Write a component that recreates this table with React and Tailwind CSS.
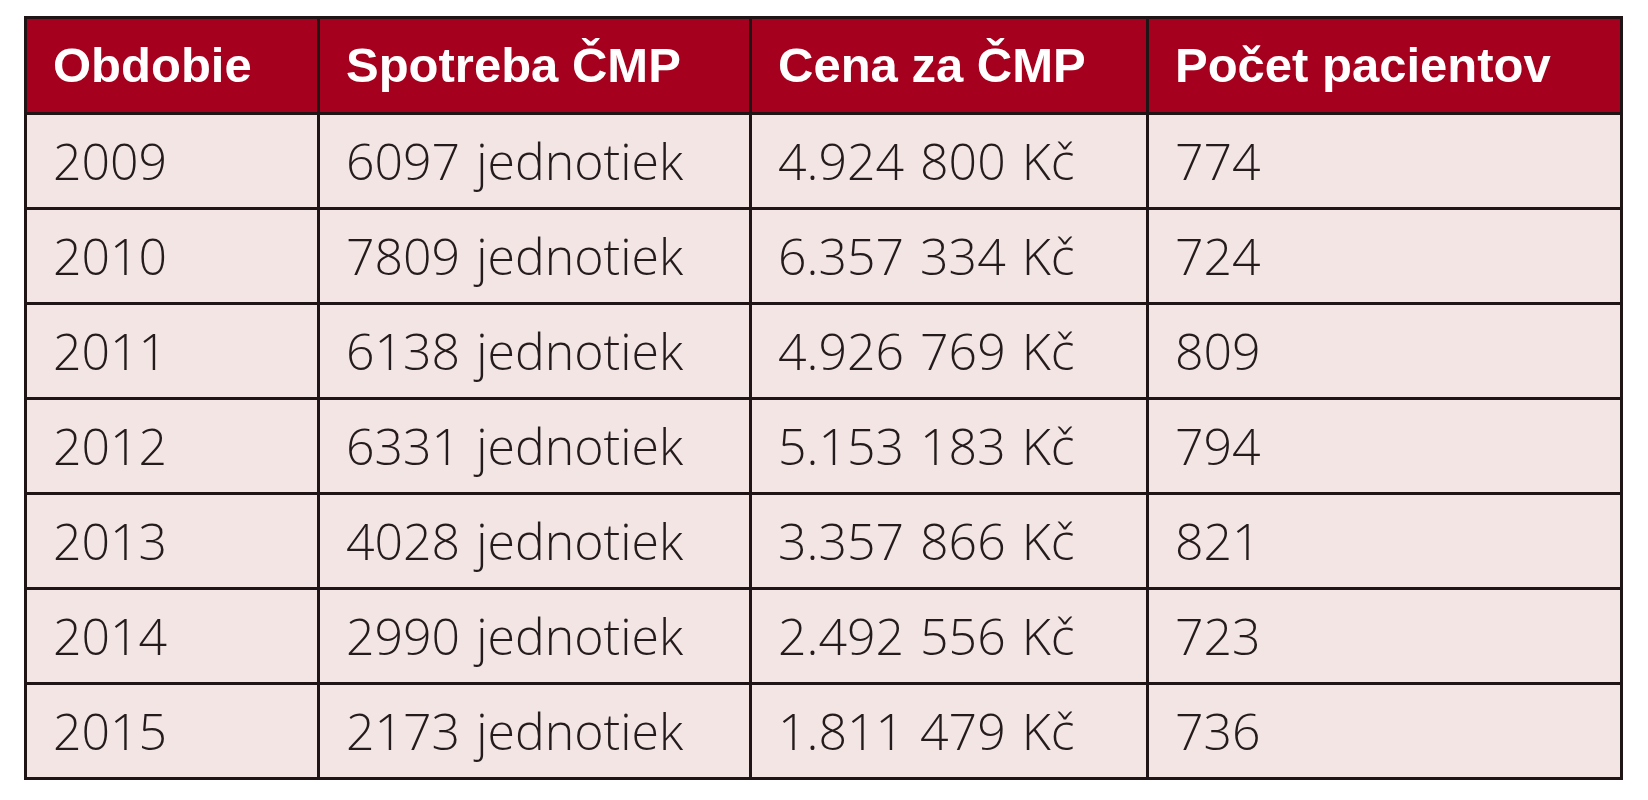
import React from "react";

const rows = [
  ["2009", "6097 jednotiek", "4.924 800 Kč", "774"],
  ["2010", "7809 jednotiek", "6.357 334 Kč", "724"],
  ["2011", "6138 jednotiek", "4.926 769 Kč", "809"],
  ["2012", "6331 jednotiek", "5.153 183 Kč", "794"],
  ["2013", "4028 jednotiek", "3.357 866 Kč", "821"],
  ["2014", "2990 jednotiek", "2.492 556 Kč", "723"],
  ["2015", "2173 jednotiek", "1.811 479 Kč", "736"],
];

const headers = ["Obdobie", "Spotreba ČMP", "Cena za ČMP", "Počet pacientov"];

export default function App() {
  return (
    <div className="w-full h-[800px] bg-white pt-[16px] pl-[24px]">
      <div className="w-[1599px] grid grid-cols-[290px_429px_394px_471px] gap-[3px] p-[3px] bg-[#1f1416]">
        {headers.map((h) => (
          <div
            key={h}
            className="h-[93px] bg-[#a6001f] flex items-center pl-[26px] text-white font-bold text-[49px] font-['Liberation_Sans',Arial,sans-serif]"
          >
            {h}
          </div>
        ))}
        {rows.map((r) =>
          r.map((c, i) => (
            <div
              key={r[0] + i}
              className="h-[92px] bg-[#f4e5e5] flex items-center pl-[26px] text-[#231b1c] font-light text-[50px] [word-spacing:3px] font-['Open_Sans',sans-serif]"
            >
              {c}
            </div>
          ))
        )}
      </div>
    </div>
  );
}
